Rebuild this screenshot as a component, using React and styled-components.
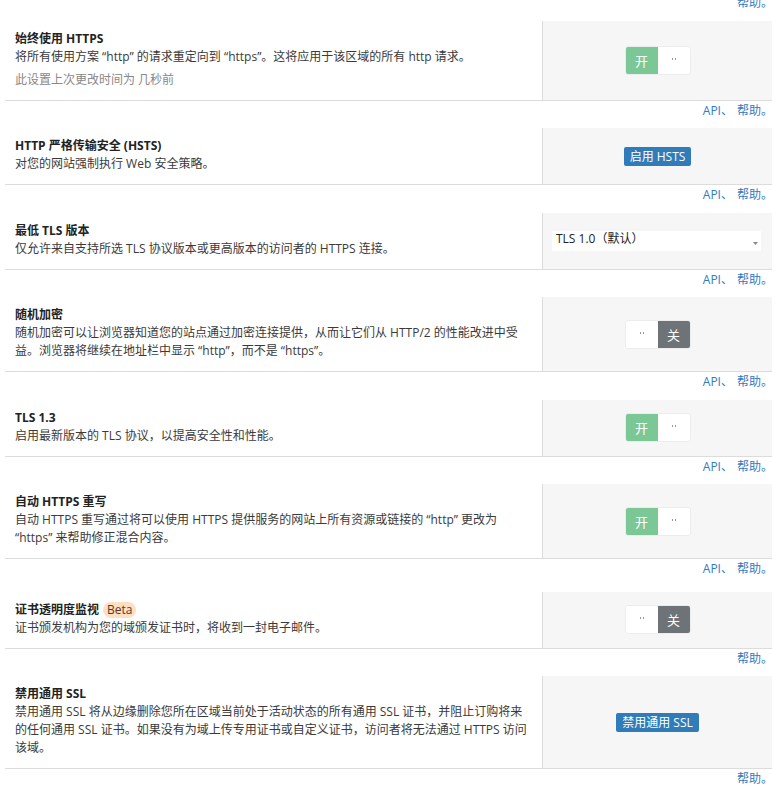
import React from 'react';
import styled, { createGlobalStyle, css } from 'styled-components';

const GlobalStyle = createGlobalStyle`
  html, body {
    margin: 0;
    padding: 0;
    background: #fff;
  }
  body {
    font-family: "Open Sans", "Noto Sans CJK SC", sans-serif;
    font-size: 12px;
    color: #333;
  }
`;

const Page = styled.div`
  margin-top: -7px;
  padding: 0 10px 0 5px;
`;

const Card = styled.div`
  display: flex;
  background: #fff;
  border-bottom: 1px solid #dcdcdc;
`;

const Info = styled.div`
  flex: 1;
  min-width: 0;
  padding: 9px 10px 11px 10px;
  line-height: 18px;
`;

const Title = styled.h3`
  margin: 0;
  font-size: 12px;
  font-weight: 700;
  line-height: 18px;
  color: #222;
  display: flex;
  align-items: center;
  gap: 4px;
`;

const Desc = styled.p`
  margin: 0;
  font-size: 12px;
  line-height: 18px;
  color: #3a3a3a;
`;

const Note = styled.p`
  margin: 5px 0 0;
  font-size: 12px;
  line-height: 18px;
  color: #888;
`;

const Badge = styled.span`
  display: inline-block;
  background: #fde0c4;
  color: #5b3a1e;
  font-weight: 400;
  font-size: 12px;
  line-height: 16px;
  padding: 0 4px;
  border-radius: 8px;
`;

const Control = styled.div`
  width: 229px;
  flex: none;
  background: #f6f6f6;
  border-left: 1px solid #dcdcdc;
  display: flex;
  align-items: center;
  justify-content: center;
`;

const Footer = styled.div`
  height: ${p => (p.$tall ? 32.5 : 27.5)}px;
  box-sizing: border-box;
  margin-right: -1px;
  padding-top: 1px;
  display: flex;
  justify-content: flex-end;
  gap: 4px;
  line-height: 18px;
`;

const Link = styled.a`
  color: #2f7bbf;
  text-decoration: none;
  font-size: 12px;
  cursor: pointer;
`;

const Switch = styled.div`
  display: flex;
  width: 64px;
  height: 27px;
  border-radius: 2px;
  overflow: hidden;
  box-shadow: 0 0 0 0.5px #e2e2e2;
`;

const Half = styled.span`
  flex: 1;
  display: flex;
  align-items: center;
  justify-content: center;
  font-size: 13px;
  color: #fff;
  background: #fff;
  ${p => p.$on && css`background: #7cc796;`}
  ${p => p.$off && css`background: #6e7377;`}
`;

const Grip = styled.span`
  width: 2px;
  height: 2px;
  border-left: 1px solid #999;
  border-right: 1px solid #999;
  margin-top: -3px;
`;

const Button = styled.button`
  border: none;
  border-radius: 2px;
  background: #2f7cb9;
  color: #fff;
  font-family: inherit;
  font-size: 12px;
  line-height: 19px;
  height: 19px;
  padding: 0 6px;
  cursor: pointer;
`;

const Select = styled.div`
  width: 209px;
  height: 20px;
  box-sizing: border-box;
  margin-left: -2px;
  background: #fff;
  position: relative;
  padding: 0 4px;
  font-size: 12px;
  line-height: 15px;
  color: #222;
`;

const Caret = styled.svg`
  position: absolute;
  right: 3px;
  bottom: 6px;
`;

const Toggle = ({ on }) => (
  <Switch>
    {on ? (
      <>
        <Half $on>开</Half>
        <Half><Grip /></Half>
      </>
    ) : (
      <>
        <Half><Grip /></Half>
        <Half $off>关</Half>
      </>
    )}
  </Switch>
);

const renderControl = c => {
  if (c.type === 'toggle') return <Toggle on={c.on} />;
  if (c.type === 'button') return <Button>{c.label}</Button>;
  return (
    <Select>
      {c.label}
      <Caret width="5" height="3" viewBox="0 0 5 3">
        <path d="M0 0 L5 0 L2.5 3 Z" fill="#888" />
      </Caret>
    </Select>
  );
};

const settings = [
  {
    title: '始终使用 HTTPS',
    desc: '将所有使用方案 “http” 的请求重定向到 “https”。这将应用于该区域的所有 http 请求。',
    note: '此设置上次更改时间为 几秒前',
    control: { type: 'toggle', on: true },
    api: true,
  },
  {
    title: 'HTTP 严格传输安全 (HSTS)',
    desc: '对您的网站强制执行 Web 安全策略。',
    control: { type: 'button', label: '启用 HSTS' },
    api: true,
  },
  {
    title: '最低 TLS 版本',
    desc: '仅允许来自支持所选 TLS 协议版本或更高版本的访问者的 HTTPS 连接。',
    control: { type: 'select', label: 'TLS 1.0（默认）' },
    api: true,
  },
  {
    title: '随机加密',
    desc: '随机加密可以让浏览器知道您的站点通过加密连接提供，从而让它们从 HTTP/2 的性能改进中受益。浏览器将继续在地址栏中显示 “http”，而不是 “https”。',
    control: { type: 'toggle', on: false },
    api: true,
  },
  {
    title: 'TLS 1.3',
    desc: '启用最新版本的 TLS 协议，以提高安全性和性能。',
    control: { type: 'toggle', on: true },
    api: true,
  },
  {
    title: '自动 HTTPS 重写',
    desc: '自动 HTTPS 重写通过将可以使用 HTTPS 提供服务的网站上所有资源或链接的 “http” 更改为 “https” 来帮助修正混合内容。',
    control: { type: 'toggle', on: true },
    api: true,
    tall: true,
  },
  {
    title: '证书透明度监视',
    beta: true,
    desc: '证书颁发机构为您的域颁发证书时，将收到一封电子邮件。',
    control: { type: 'toggle', on: false },
    api: false,
  },
  {
    title: '禁用通用 SSL',
    desc: '禁用通用 SSL 将从边缘删除您所在区域当前处于活动状态的所有通用 SSL 证书，并阻止订购将来的任何通用 SSL 证书。如果没有为域上传专用证书或自定义证书，访问者将无法通过 HTTPS 访问该域。',
    control: { type: 'button', label: '禁用通用 SSL' },
    api: false,
  },
];

const Links = ({ api, tall }) => (
  <Footer $tall={tall}>
    {api && <Link>API、</Link>}
    <Link>帮助。</Link>
  </Footer>
);

export default function App() {
  return (
    <>
      <GlobalStyle />
      <Page>
        <Links api={false} />
        {settings.map(s => (
          <React.Fragment key={s.title}>
            <Card>
              <Info>
                <Title>
                  {s.title}
                  {s.beta && <Badge>Beta</Badge>}
                </Title>
                <Desc>{s.desc}</Desc>
                {s.note && <Note>{s.note}</Note>}
              </Info>
              <Control>{renderControl(s.control)}</Control>
            </Card>
            <Links api={s.api} tall={s.tall} />
          </React.Fragment>
        ))}
      </Page>
    </>
  );
}
